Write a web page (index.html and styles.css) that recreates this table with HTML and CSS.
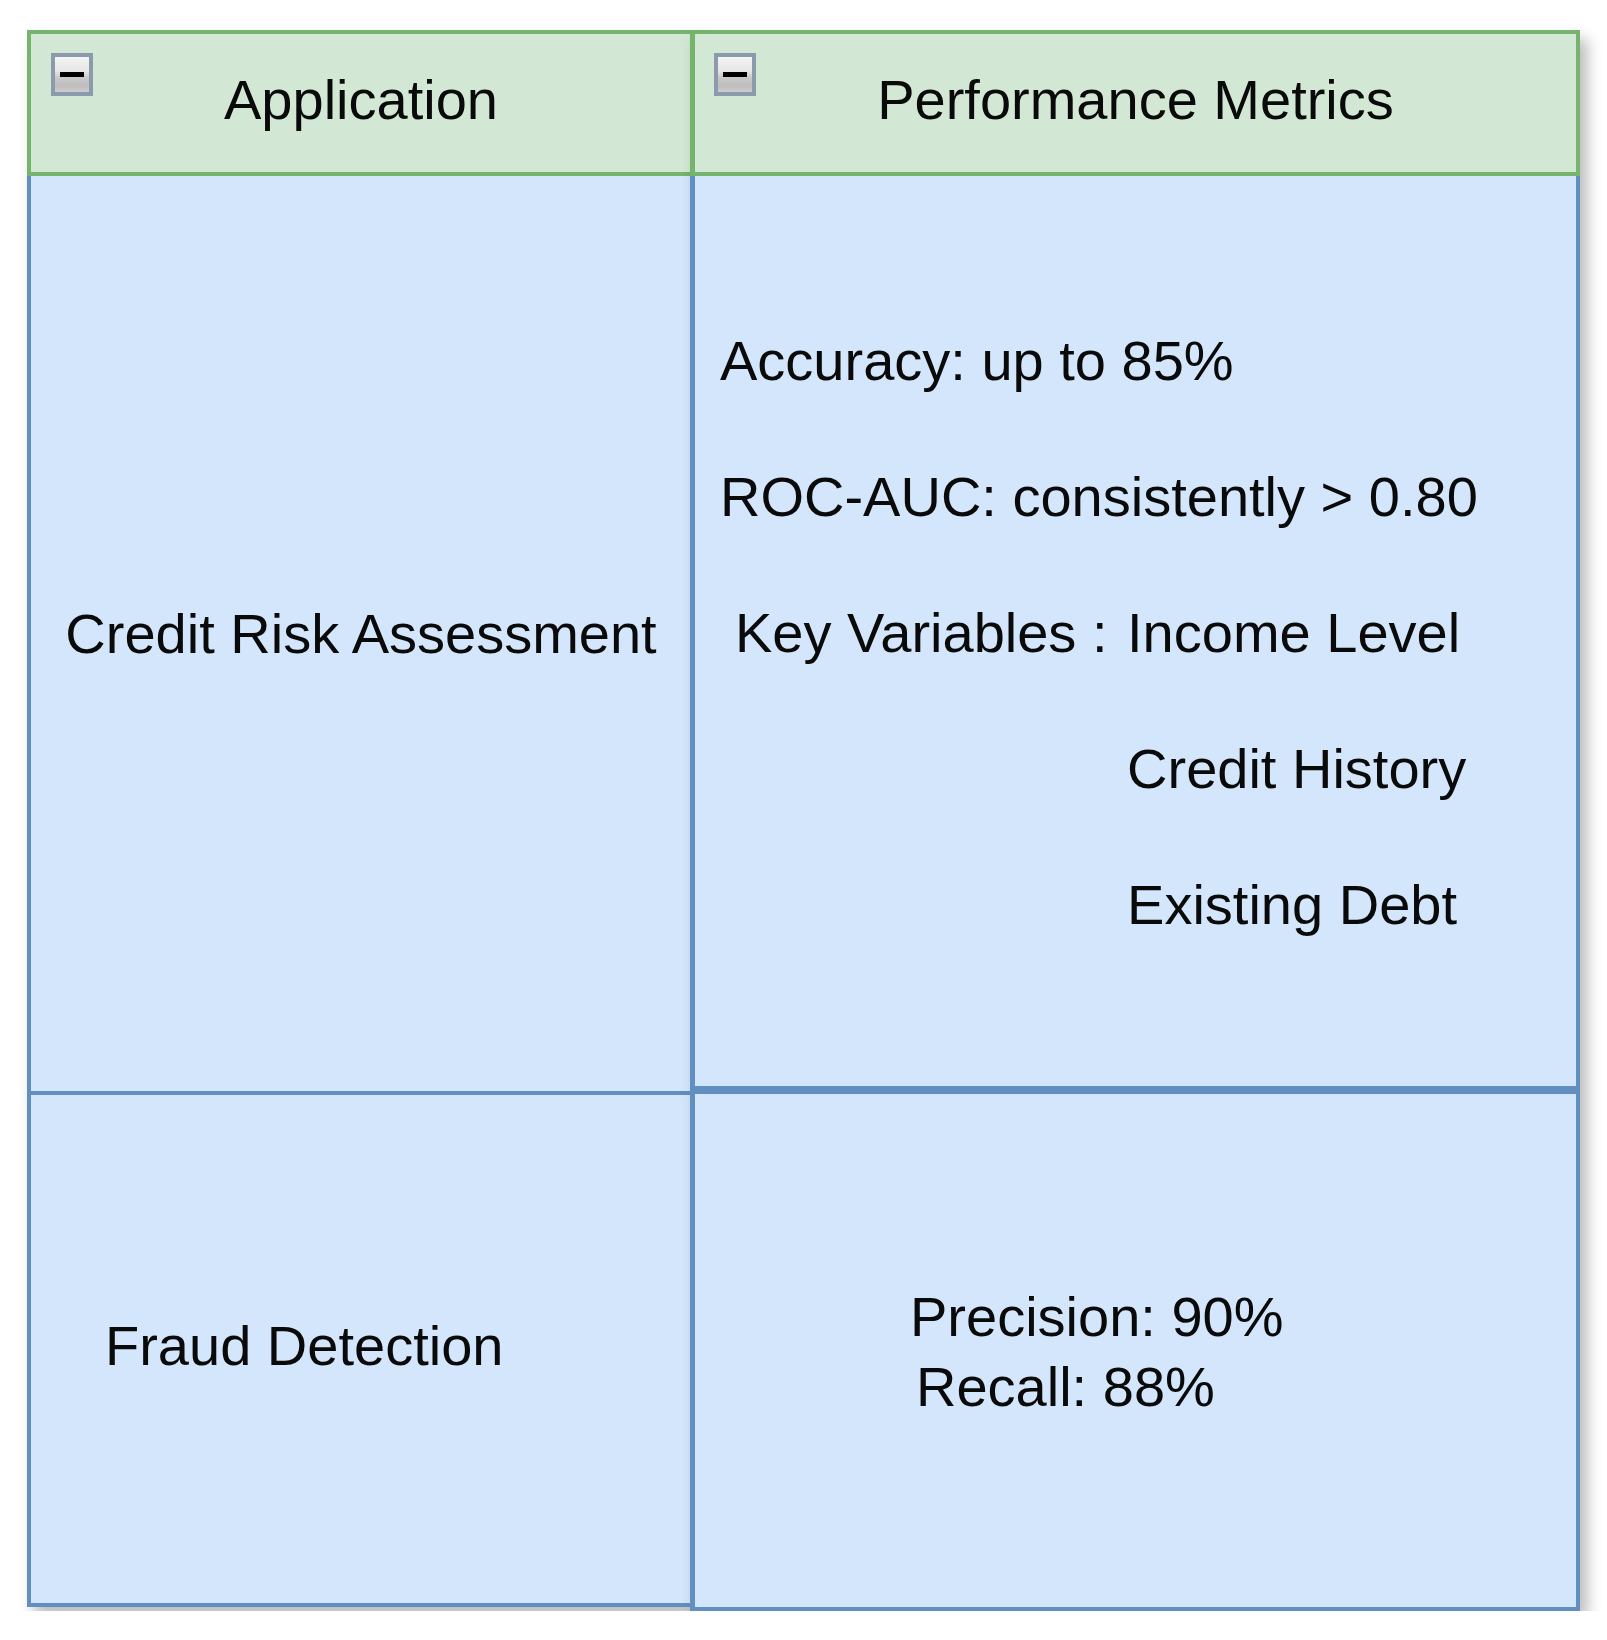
FILE: index.html
```html
<!DOCTYPE html>
<html>
<head>
<meta charset="utf-8">
<title>Application / Performance Metrics</title>
<link rel="stylesheet" href="styles.css">
</head>
<body>
<div class="board">
  <div class="col col-left">
    <div class="head">
      <span class="toggle"><span class="dash"></span></span>
      <span class="head-title">Application</span>
    </div>
    <div class="cell cell-top-left">
      <span>Credit Risk Assessment</span>
    </div>
    <div class="cell cell-bottom-left">
      <span>Fraud Detection</span>
    </div>
  </div>
  <div class="col col-right">
    <div class="head">
      <span class="toggle"><span class="dash"></span></span>
      <span class="head-title">Performance Metrics</span>
    </div>
    <div class="cell cell-top-right">
      <div class="metrics">
        <div class="line">Accuracy: up to 85%</div>
        <div class="line">ROC-AUC: consistently &gt; 0.80</div>
        <div class="keyvars">
          <div class="line key-label">Key Variables : </div>
          <div class="key-values">
            <div class="line">Income Level</div>
            <div class="line">Credit History</div>
            <div class="line">Existing Debt</div>
          </div>
        </div>
      </div>
    </div>
    <div class="cell cell-bottom-right">
      <div class="fraud-metrics">
        <div class="fline">Precision: 90%</div>
        <div class="fline recall">Recall: 88%</div>
      </div>
    </div>
  </div>
</div>
</body>
</html>
```

FILE: styles.css
```css
* {
  box-sizing: border-box;
}

html, body {
  margin: 0;
  padding: 0;
  background: #ffffff;
}

body {
  font-family: "Liberation Sans", Arial, sans-serif;
  font-size: 56px;
  color: #0a0a0a;
}

.board {
  display: flex;
  align-items: flex-start;
  padding: 30px 0 0 27px;
}

.col {
  display: flex;
  flex-direction: column;
  box-shadow: 7px 9px 14px rgba(0, 0, 0, 0.28);
}

.col-left {
  width: 668px;
  position: relative;
  z-index: 0;
}

.col-right {
  width: 890px;
  margin-left: -5px;
  position: relative;
  z-index: 1;
}

.head {
  position: relative;
  height: 146px;
  background: #d2e8d4;
  border: 4px solid #74b46c;
  display: flex;
  align-items: center;
  justify-content: center;
  padding-bottom: 6px;
}

.col-right .head {
  border-left-width: 5px;
}

.head-title {
  line-height: 64px;
  white-space: nowrap;
}

.toggle {
  position: absolute;
  left: 20px;
  top: 19px;
  width: 42px;
  height: 43px;
  border: 4px solid #8c9aae;
  background: linear-gradient(#f4f4f4 0%, #e6e6e6 40%, #c9c9c9 58%, #bdbdbd 85%, #cfcfcf 100%);
  display: flex;
  align-items: center;
  justify-content: center;
}

.col-right .toggle {
  left: 19px;
}

.dash {
  width: 24px;
  height: 5px;
  background: #000000;
}

.cell {
  background: #d4e6fc;
  border: 4px solid #6190c0;
  display: flex;
  align-items: center;
  margin-top: -4px;
}

.col-right .cell {
  border-left-width: 5px;
}

.cell-top-left {
  height: 923px;
  justify-content: center;
  white-space: nowrap;
}

.cell-bottom-left {
  height: 516px;
  justify-content: flex-start;
  padding-left: 74px;
  padding-bottom: 8px;
  white-space: nowrap;
}

.cell-top-right {
  height: 918px;
  padding-left: 25px;
  padding-top: 4px;
}

.cell-bottom-right {
  height: 521px;
  margin-top: 0;
  padding-left: 215px;
}

.metrics {
  display: flex;
  flex-direction: column;
  gap: 68px;
}

.line {
  line-height: 68px;
  height: 68px;
  white-space: pre;
}

.keyvars {
  display: flex;
  align-items: flex-start;
  padding-left: 15px;
}

.key-values {
  display: flex;
  flex-direction: column;
  gap: 68px;
  padding-left: 4px;
}

.fraud-metrics {
  display: flex;
  flex-direction: column;
  padding-top: 2px;
}

.fline {
  line-height: 70px;
  white-space: nowrap;
}

.recall {
  padding-left: 6px;
}
```
